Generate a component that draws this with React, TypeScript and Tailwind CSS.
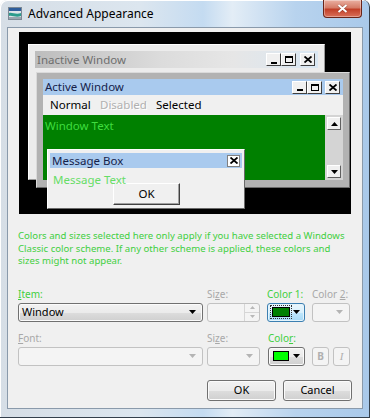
import React from 'react';

function Tri({ color = '#000', up = false }: { color?: string; up?: boolean }) {
  return (
    <svg width="7" height="4" viewBox="0 0 7 4" className="block">
      <path d={up ? 'M0 4h7L3.5 0z' : 'M0 0h7L3.5 4z'} fill={color} />
    </svg>
  );
}

function CapBtn({ kind }: { kind: 'min' | 'max' | 'close' }) {
  return (
    <div className="w-[15px] h-[13px] bg-[#f0f0f0] border border-t-white border-l-white border-r-[#404040] border-b-[#404040] flex items-center justify-center shrink-0">
      {kind === 'min' && <div className="w-[6px] h-[2px] bg-black mt-[6px]" />}
      {kind === 'max' && <div className="w-[8px] h-[7px] border border-black border-t-2" />}
      {kind === 'close' && (
        <svg width="8" height="7" viewBox="0 0 8 7">
          <path d="M0.5 0.5L7.5 6.5M7.5 0.5L0.5 6.5" stroke="#000" strokeWidth="1.8" />
        </svg>
      )}
    </div>
  );
}

function AppIcon() {
  return (
    <svg width="14" height="13" viewBox="0 0 14 13" className="ml-[8px] mt-[7px] shrink-0">
      <rect x="0.5" y="0.5" width="13" height="12" fill="#dfe4ea" stroke="#7b8894" />
      <rect x="1" y="1" width="12" height="3" fill="#2f5e9c" />
      <path d="M1 6 C4 5 8 8 13 6 V9 C8 11 4 8 1 9 Z" fill="#2c9c8c" />
      <rect x="1" y="10" width="12" height="2" fill="#9aa6b0" />
    </svg>
  );
}

function CloseBtn() {
  return (
    <div className="ml-auto mr-[7px] w-[39px] h-[18px] rounded-b-[4px] border border-t-0 border-[#6a2418] bg-[linear-gradient(180deg,#eab0a2_0%,#d57c68_45%,#c23f28_55%,#d9705a_100%)] flex items-center justify-center shadow-[inset_0_0_0_1px_rgba(255,255,255,0.35)]">
      <svg width="11" height="9" viewBox="0 0 11 9">
        <path d="M1.5 1L9.5 8M9.5 1L1.5 8" stroke="#5a1a10" strokeWidth="3" strokeOpacity="0.45" />
        <path d="M1.5 1L9.5 8M9.5 1L1.5 8" stroke="#fff" strokeWidth="2" />
      </svg>
    </div>
  );
}

function Preview() {
  return (
    <div className="relative w-[332px] h-[182px] bg-black ml-[1px] overflow-hidden text-[11.5px] leading-[14px]">
      {/* inactive window */}
      <div className="absolute left-[9px] top-[12px] w-[297px] h-[136px] bg-[#ececec] border border-t-white border-l-white border-r-[#9a9a9a] border-b-[#9a9a9a]">
        <div className="absolute left-[6px] top-[6px] w-[283px] h-[17px] bg-[linear-gradient(90deg,#bdbdbd_0%,#dcdcdc_45%,#e6e6e6_70%,#d9e7f3_100%)] flex items-center">
          <span className="pl-[2px] text-[#6e6e6e]">Inactive Window</span>
          <div className="ml-auto mr-[3px] flex items-center">
            <CapBtn kind="min" />
            <CapBtn kind="max" />
            <div className="w-[4px]" />
            <CapBtn kind="close" />
          </div>
        </div>
      </div>

      {/* active window */}
      <div className="absolute left-[17px] top-[40px] w-[314px] h-[116px] bg-[#b2b2b2] border border-t-[#dadada] border-l-[#dadada] border-r-[#6a6a6a] border-b-[#6a6a6a] p-[6px] flex flex-col">
        <div className="h-[16px] bg-[#a9caee] flex items-center shrink-0">
          <span className="pl-[2px] text-[#15224a]">Active Window</span>
          <div className="ml-auto mr-[3px] flex items-center">
            <CapBtn kind="min" />
            <CapBtn kind="max" />
            <div className="w-[3px]" />
            <CapBtn kind="close" />
          </div>
        </div>
        <div className="h-[20px] bg-[#f0f0f0] flex items-center shrink-0 text-black">
          <span className="ml-[7px] w-[50px]">Normal</span>
          <span className="w-[56px] text-[#b0b0b0] [text-shadow:1px_1px_0_#fff]">Disabled</span>
          <span>Selected</span>
        </div>
        <div className="h-[65px] flex shrink-0">
          <div className="flex-1 bg-[#008000] text-[#3fdc3f] pl-[2px] pt-[4px]">Window Text</div>
          <div className="w-[18px] bg-[#d4d4d4] flex flex-col justify-between py-[2px] pl-[2px]">
            <div className="w-[14px] h-[13px] bg-[#f0f0f0] border border-t-white border-l-white border-r-[#606060] border-b-[#606060] flex items-center justify-center">
              <Tri up />
            </div>
            <div className="w-[14px] h-[13px] bg-[#f0f0f0] border border-t-white border-l-white border-r-[#606060] border-b-[#606060] flex items-center justify-center">
              <Tri />
            </div>
          </div>
        </div>
      </div>

      {/* message box */}
      <div className="absolute left-[28px] top-[117px] w-[198px] h-[60px] bg-[#f0f0f0] border border-t-white border-l-white border-r-[#6a6a6a] border-b-[#6a6a6a] pt-[3px] px-[2px]">
        <div className="h-[15px] bg-[#a9caee] flex items-center">
          <span className="pl-[2px] text-[#15224a]">Message Box</span>
          <div className="ml-auto mr-[2px] w-[13px] h-[12px] bg-white border border-[#808080] flex items-center justify-center">
            <svg width="8" height="7" viewBox="0 0 8 7">
              <path d="M0.5 0.5L7.5 6.5M7.5 0.5L0.5 6.5" stroke="#000" strokeWidth="1.8" />
            </svg>
          </div>
        </div>
        <div className="mt-[5px] pl-[3px] text-[#66dd66] leading-[14px]">Message Text</div>
        <div className="-mt-[4px] ml-[63px] w-[67px] h-[22px] bg-[#f0f0f0] border border-t-white border-l-white border-r-[#404040] border-b-[#404040] shadow-[inset_-1px_-1px_0_#a0a0a0] flex items-center justify-center text-black">
          OK
        </div>
      </div>
    </div>
  );
}

const vistaBtn =
  'border border-[#707070] rounded-[3px] bg-[linear-gradient(180deg,#f2f2f2_0%,#ebebeb_50%,#dddddd_51%,#cfcfcf_100%)] shadow-[inset_0_0_0_1px_#fbfbfb]';
const disabledBox = 'border border-[#c2c2c2] rounded-[3px] bg-[#f4f4f4]';

export default function App() {
  return (
    <div className="w-[376px] h-[419px] bg-white overflow-hidden font-['Noto_Sans','Open_Sans',sans-serif]">
      <div className="w-[370px] h-[418px] flex flex-col rounded-t-[7px] border-r border-b border-[#34404c] bg-[linear-gradient(90deg,#d6dee6_0%,#dce6ef_38%,#c4dbf1_55%,#e3edf6_63%,#b8d3ee_80%,#a9c9ea_100%)] shadow-[inset_1px_1px_0_#fff]">
        {/* title bar */}
        <div className="h-[27px] flex items-start shrink-0">
          <AppIcon />
          <span className="ml-[6px] mt-[6px] text-[12px] leading-[16px] text-black">Advanced Appearance</span>
          <CloseBtn />
        </div>

        {/* client */}
        <div className="ml-[7px] mr-[6px] h-[382px] border border-[#8a9aab] bg-[#f0f0f0] pl-[10px] pr-[10px] pt-[4px] text-[10px] leading-[12px]">
          <Preview />

          <p className="mt-[16px] text-[#3fcf3f] text-[9.6px] leading-[12.5px] whitespace-nowrap">
            Colors and sizes selected here only apply if you have selected a Windows
            <br />
            Classic color scheme. If any other scheme is applied, these colors and
            <br />
            sizes might not appear.
          </p>

          {/* item row */}
          <div className="mt-[20px] flex whitespace-nowrap">
            <span className="w-[185px] text-[#3fcf3f]">
              <span className="underline">I</span>tem:
            </span>
            <span className="ml-[4px] w-[53px] text-[#a8a8a8]">
              Si<span className="underline">z</span>e:
            </span>
            <span className="ml-[7px] w-[38px] text-[#3fcf3f]">Color 1:</span>
            <span className="ml-[7px] w-[38px] text-[#a8a8a8]">
              Color <span className="underline">2</span>:
            </span>
          </div>
          <div className="mt-[3px] flex h-[19px]">
            <div className={`w-[185px] ${vistaBtn} flex items-center justify-between pl-[3px] pr-[6px] text-[11px] text-black`}>
              <span>Window</span>
              <Tri />
            </div>
            <div className={`ml-[4px] w-[53px] ${disabledBox} flex justify-end`}>
              <div className="w-[15px] h-full border-l border-[#d6d6d6] flex flex-col">
                <div className="flex-1 flex items-center justify-center border-b border-[#d6d6d6]">
                  <svg width="5" height="3" viewBox="0 0 5 3"><path d="M0 3h5L2.5 0z" fill="#b8b8b8" /></svg>
                </div>
                <div className="flex-1 flex items-center justify-center">
                  <svg width="5" height="3" viewBox="0 0 5 3"><path d="M0 0h5L2.5 3z" fill="#b8b8b8" /></svg>
                </div>
              </div>
            </div>
            <div className="ml-[7px] w-[38px] rounded-[3px] border border-[#3c7fb1] bg-[linear-gradient(180deg,#eaf6fd_0%,#d9f0fc_50%,#bee6fd_51%,#a7d9f5_100%)] shadow-[inset_0_0_0_1px_#e4f4fc] flex items-center pl-[4px] pr-[4px] justify-between">
              <div className="w-[18px] h-[10px] bg-[#008000] border border-black outline outline-1 outline-dotted outline-[#333] outline-offset-[1px]" />
              <Tri />
            </div>
            <div className={`ml-[7px] w-[38px] ${disabledBox} flex items-center justify-end pr-[6px]`}>
              <Tri color="#b4b4b4" />
            </div>
          </div>

          {/* font row */}
          <div className="mt-[10px] flex whitespace-nowrap">
            <span className="w-[185px] text-[#a8a8a8]">
              <span className="underline">F</span>ont:
            </span>
            <span className="ml-[4px] w-[53px] text-[#a8a8a8]">
              Si<span className="underline">z</span>e:
            </span>
            <span className="ml-[8px] w-[38px] text-[#3fcf3f]">
              Colo<span className="underline">r</span>:
            </span>
          </div>
          <div className="mt-[3px] flex h-[19px]">
            <div className={`w-[185px] ${disabledBox} flex items-center justify-end pr-[6px]`}>
              <Tri color="#b4b4b4" />
            </div>
            <div className={`ml-[4px] w-[53px] ${disabledBox} flex items-center justify-end pr-[6px]`}>
              <Tri color="#b4b4b4" />
            </div>
            <div className={`ml-[8px] w-[37px] ${vistaBtn} flex items-center pl-[4px] pr-[4px] justify-between`}>
              <div className="w-[16px] h-[10px] bg-[#00ff00] border border-black" />
              <Tri />
            </div>
            <div className={`ml-[7px] w-[17px] ${disabledBox} flex items-center justify-center text-[#b0b0b0] font-bold text-[10px]`}>
              B
            </div>
            <div className={`ml-[4px] w-[17px] ${disabledBox} flex items-center justify-center text-[#b0b0b0] italic text-[11px] font-['Liberation_Serif',serif]`}>
              I
            </div>
          </div>

          {/* buttons */}
          <div className="mt-[14px] flex justify-end gap-[7px] text-[11px]">
            <div className={`w-[69px] h-[21px] ${vistaBtn} flex items-center justify-center text-black`}>OK</div>
            <div className={`w-[69px] h-[21px] ${vistaBtn} flex items-center justify-center text-black`}>Cancel</div>
          </div>
        </div>
      </div>
    </div>
  );
}
